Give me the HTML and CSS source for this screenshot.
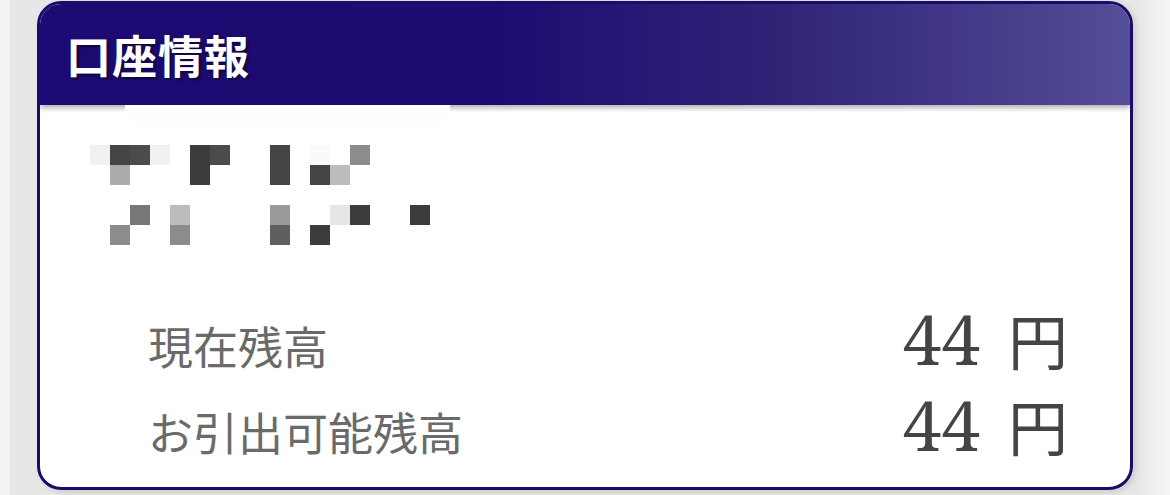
FILE: index.html
```html
<!DOCTYPE html>
<html>
<head>
<meta charset="utf-8">
<link rel="stylesheet" href="styles.css">
</head>
<body>
<div class="page">
  <section class="card">
    <header class="card-head"><h1 class="title">口座情報</h1></header>
    <div class="card-body">
      <div class="mosaic">
        <i class="xl"></i><i class="d"></i><i class="d2"></i><i class="xl"></i><i></i><i class="d3"></i><i class="d2"></i><i></i><i></i><i class="d"></i><i></i><i class="w"></i><i></i><i class="m"></i><i></i><i></i><i></i>
        <i></i><i class="l"></i><i></i><i></i><i></i><i class="d3"></i><i></i><i></i><i></i><i class="d"></i><i></i><i class="d"></i><i class="ll"></i><i></i><i></i><i></i><i></i>
        <i></i><i></i><i></i><i></i><i></i><i></i><i></i><i></i><i></i><i></i><i></i><i></i><i></i><i></i><i></i><i></i><i></i>
        <i></i><i></i><i class="m2"></i><i></i><i class="ll"></i><i></i><i></i><i></i><i></i><i class="m3"></i><i></i><i></i><i class="xl2"></i><i class="d3"></i><i></i><i></i><i class="d3"></i>
        <i></i><i class="m"></i><i></i><i></i><i class="m"></i><i></i><i></i><i></i><i></i><i class="m4"></i><i></i><i class="d3"></i><i></i><i></i><i></i><i></i><i></i>
      </div>
      <div class="rows">
        <div class="row"><span class="label">現在残高</span><span class="amount"><span class="num">44</span><span class="yen">円</span></span></div>
        <div class="row"><span class="label">お引出可能残高</span><span class="amount"><span class="num">44</span><span class="yen">円</span></span></div>
      </div>
    </div>
  </section>
</div>
</body>
</html>
```
FILE: styles.css
```css
html, body {
  margin: 0;
  padding: 0;
}
body {
  background: linear-gradient(90deg, #f3f3f3 0, #f3f3f3 10px, #e7e7e7 10px, #e7e7e7 1140px, #efefef 1150px, #f4f4f4 1170px);
  height: 495px;
  overflow: hidden;
  font-family: "Noto Serif", "Noto Sans CJK JP", serif;
}
.page {
  padding: 1px 0 0 37px;
}
.card {
  width: 1090px;
  border: 3px solid #1c0b6c;
  border-radius: 24px;
  overflow: hidden;
  background: #fff;
  box-shadow: 3px 2px 6px rgba(0, 0, 0, 0.12);
}
.card-head {
  position: relative;
  z-index: 1;
  height: 101px;
  display: flex;
  align-items: center;
  padding-left: 26px;
  background: linear-gradient(90deg, #1d0a72 0%, #1e0c72 42%, #2f2476 68%, #463d8b 88%, #564e99 100%);
  box-shadow: 0 3px 5px rgba(0, 0, 0, 0.3);
}
.title {
  margin: 0;
  color: #fff;
  font-family: "Noto Sans CJK JP", sans-serif;
  font-size: 45px;
  font-weight: 700;
  letter-spacing: 1px;
  text-shadow: 2px 2px 3px rgba(0, 0, 0, 0.5);
}
.card-body {
  position: relative;
  padding: 40px 62px 20px 50px;
}
.card-body::before {
  content: "";
  position: absolute;
  z-index: 2;
  left: 85px;
  top: 0;
  width: 325px;
  height: 18px;
  background: #fdfdfd;
  border-radius: 0 0 14px 14px;
}
.mosaic {
  display: grid;
  grid-template-columns: repeat(17, 20px);
  grid-auto-rows: 20px;
}
.mosaic i { display: block; }
.mosaic .d { background: #454545; }
.mosaic .d2 { background: #4b4b4b; }
.mosaic .d3 { background: #3c3c3c; }
.mosaic .m { background: #8c8c8c; }
.mosaic .m2 { background: #777; }
.mosaic .m3 { background: #9a9a9a; }
.mosaic .m4 { background: #5f5f5f; }
.mosaic .l { background: #ababab; }
.mosaic .ll { background: #bcbcbc; }
.mosaic .xl { background: #f1f1f1; }
.mosaic .xl2 { background: #e6e6e6; }
.mosaic .w { background: #fafafa; }
.rows {
  margin-top: 50px;
  padding-left: 58px;
}
.row {
  display: flex;
  justify-content: space-between;
  align-items: baseline;
  height: 86px;
  line-height: 86px;
}
.label {
  font-family: "Noto Sans CJK JP", sans-serif;
  font-size: 45px;
  color: #6a6a6a;
  font-weight: 400;
}
.amount {
  color: #444;
  white-space: nowrap;
  display: flex;
  align-items: baseline;
}
.num {
  font-family: "Noto Serif", serif;
  font-size: 69px;
}
.yen {
  font-family: "Noto Sans CJK JP", sans-serif;
  font-size: 60px;
  margin-left: 28px;
}
```
